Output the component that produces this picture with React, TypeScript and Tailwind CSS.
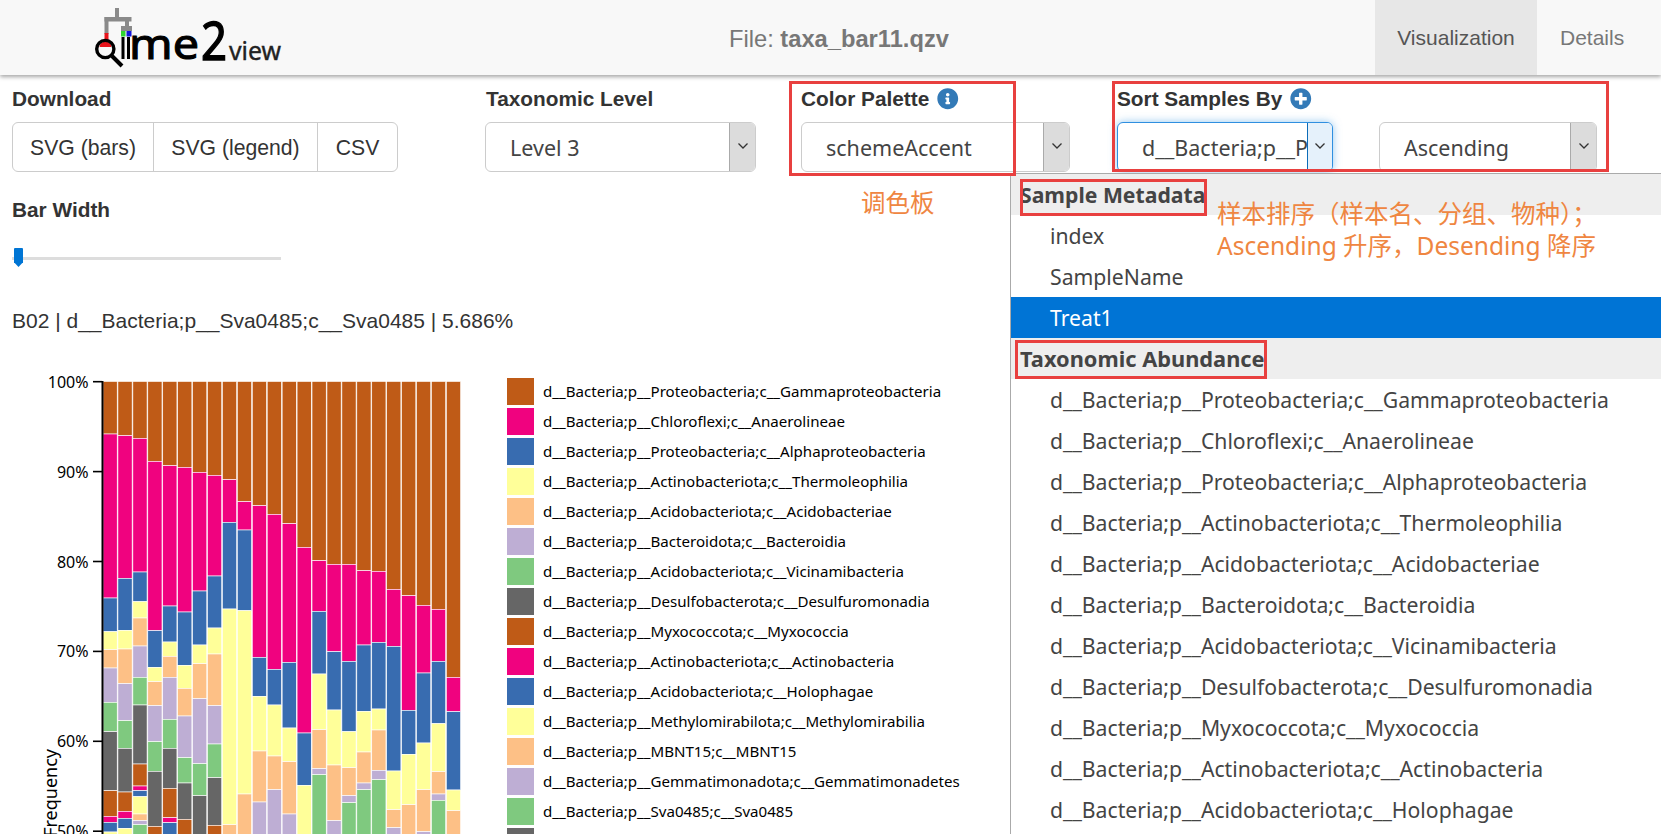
import React from 'react';
import { FaInfoCircle, FaPlusCircle } from 'react-icons/fa';

const uiFont = { fontFamily: '"Noto Sans", sans-serif' };

const ACCENT = ['#bf5b17', '#f0027f', '#386cb0', '#ffff99', '#fdc086', '#beaed4', '#7fc97f', '#666666'];

// y of each colour change per bar, top of the plot is 381.5
const BARS: number[][] = [
  [434, 598, 631.7, 649.7, 668, 702.3, 731.7, 790.7, 816.3, 822.3, 832],
  [435.7, 578.3, 630.3, 649, 683.7, 720.7, 748.3, 792, 811.3, 818.3, 828.3],
  [438.3, 572, 601.7, 618, 646, 677.3, 705, 764, 786, 790.7, 796.7, 814, 820.7, 824.7],
  [461.3, 630.7, 667.3, 681.7, 705.7, 741.7, 771.3, 826.3],
  [465.7, 606, 642, 656.3, 677.3, 719.3, 748.3, 788.3, 817.7, 822.7],
  [467.3, 612, 665.3, 688.3, 716, 757.7, 783, 819.3],
  [472.3, 591, 645, 663.7, 698.7, 763.7, 795.7],
  [475.3, 576, 628, 654, 705.7, 744, 777.7, 825.3],
  [479.7, 522.3, 609, 824.7],
  [501.7, 530, 610.7, 794],
  [505.7, 657.3, 696.3, 751, 802],
  [514.3, 669.3, 705, 756, 789.7],
  [523.7, 662.3, 728, 761.7, 814],
  [547.3, 733, 785.3],
  [560.7, 611.3, 674, 729.7, 768.7, 774.7],
  [564.3, 651.7, 710, 765, 820.7],
  [564.3, 661.3, 731.7, 767.7, 795.7, 802.7],
  [570.7, 645, 711.3, 752, 783, 789.7],
  [571.3, 642.3, 709, 730, 770.3, 779.7],
  [589.3, 646.3, 771, 809.7, 827.7],
  [595.7, 710.3, 754.3, 804.7],
  [605.3, 673, 743, 789.7, 831.7],
  [609.3, 661.3, 723.7, 771.7, 794, 800.3],
  [677.3, 711.7, 790, 810.7],
];

const TAXA = [
  'd__Bacteria;p__Proteobacteria;c__Gammaproteobacteria',
  'd__Bacteria;p__Chloroflexi;c__Anaerolineae',
  'd__Bacteria;p__Proteobacteria;c__Alphaproteobacteria',
  'd__Bacteria;p__Actinobacteriota;c__Thermoleophilia',
  'd__Bacteria;p__Acidobacteriota;c__Acidobacteriae',
  'd__Bacteria;p__Bacteroidota;c__Bacteroidia',
  'd__Bacteria;p__Acidobacteriota;c__Vicinamibacteria',
  'd__Bacteria;p__Desulfobacterota;c__Desulfuromonadia',
  'd__Bacteria;p__Myxococcota;c__Myxococcia',
  'd__Bacteria;p__Actinobacteriota;c__Actinobacteria',
  'd__Bacteria;p__Acidobacteriota;c__Holophagae',
  'd__Bacteria;p__Methylomirabilota;c__Methylomirabilia',
  'd__Bacteria;p__MBNT15;c__MBNT15',
  'd__Bacteria;p__Gemmatimonadota;c__Gemmatimonadetes',
  'd__Bacteria;p__Sva0485;c__Sva0485',
  'd__Bacteria;p__Firmicutes;c__Bacilli',
];

const Chevron = () => (
  <svg width="12" height="8" viewBox="0 0 12 8" fill="none" stroke="#333" strokeWidth="1.3">
    <path d="M1.5 1.5 L6 6 L10.5 1.5" />
  </svg>
);

const Logo = () => (
  <svg width="200" height="75" viewBox="90 0 200 75">
    <g fill="#8a8a8a">
      <rect x="115" y="8" width="4" height="10" />
      <rect x="104.5" y="17" width="27" height="4.5" />
      <rect x="104.5" y="17" width="4" height="17" />
      <rect x="125" y="17" width="4" height="12" />
      <rect x="121" y="26" width="11" height="5" />
    </g>
    <rect x="104.5" y="33" width="4" height="8" fill="#e8141c" />
    <rect x="121" y="31" width="4.5" height="5.5" fill="#2fd52f" />
    <rect x="126.5" y="31" width="5" height="5.5" fill="#1414d8" />
    <path d="M99.5 47 a6 5.5 0 0 1 12 0 z" fill="#e8141c" />
    <circle cx="105.3" cy="49" r="8.6" fill="none" stroke="#000" strokeWidth="3.4" />
    <path d="M112 56 L122 66" stroke="#000" strokeWidth="4" />
    <rect x="121.5" y="37" width="3" height="22" fill="#000" />
    <rect x="127" y="37" width="3" height="22" fill="#000" />
    <text x="129" y="59" fontFamily='"Noto Sans", sans-serif' fontSize="41" textLength="70" lengthAdjust="spacingAndGlyphs" fill="#000" stroke="#000" strokeWidth="1">me</text>
    <text x="201" y="60" fontFamily='"Noto Sans", sans-serif' fontSize="52" textLength="26" lengthAdjust="spacingAndGlyphs" fill="#000" stroke="#000" strokeWidth="1.4">2</text>
    <text x="229" y="59.5" fontFamily='"Noto Sans", sans-serif' fontSize="26" textLength="52" lengthAdjust="spacingAndGlyphs" fill="#222" stroke="#222" strokeWidth="0.4">view</text>
  </svg>
);

const SelectBox: React.FC<{ value: string; className: string; focused?: boolean }> = ({ value, className, focused }) => (
  <div
    className={
      'flex h-[50px] overflow-hidden rounded-md border bg-white ' +
      (focused ? 'border-[#2f8fe0] shadow-[0_0_8px_rgba(102,175,233,0.7)] ' : 'border-[#ccc] ') +
      className
    }
  >
    <div className="min-w-0 flex-1 overflow-hidden whitespace-nowrap pl-6 pt-[7px] text-[21.5px] leading-[36px] text-[#444]" style={uiFont}>
      {value}
    </div>
    <div
      className={
        'flex shrink-0 items-center justify-center border-l pb-[2px] ' +
        (focused ? 'w-[25px] border-[#0c6cb8] bg-[#e5f1fb]' : 'w-[26px] border-[#aaa] bg-[#dcdcdc]')
      }
    >
      <Chevron />
    </div>
  </div>
);

const Label: React.FC<{ children: React.ReactNode }> = ({ children }) => (
  <div className="flex h-[24px] items-center gap-[8px] text-[20.8px] font-bold leading-[24px] text-[#333]">{children}</div>
);

const Chart = () => {
  const ticks = [100, 90, 80, 70, 60, 50];
  return (
    <svg width="490" height="474" viewBox="0 360 490 474" className="block shrink-0">
      {BARS.map((stops, i) => {
        const x = 103 + i * 14.93;
        const ys = [381.5, ...stops, 840];
        return (
          <g key={i}>
            {ys.slice(0, -1).map((y, j) => (
              <rect
                key={j}
                x={x}
                y={y}
                width={14.2}
                height={ys[j + 1] - y}
                fill={ACCENT[j % 8]}
                stroke="#fff"
                strokeWidth="0.6"
              />
            ))}
          </g>
        );
      })}
      <path d="M102.5 381 V834" stroke="#000" strokeWidth="2" />
      {ticks.map((t, i) => {
        const y = 381.7 + i * 89.9;
        return (
          <g key={t}>
            <path d={`M93 ${y} H102`} stroke="#000" strokeWidth="1.6" />
            <text x="88.5" y={y + 6} textAnchor="end" fontSize="16" fill="#000" fontFamily='"Noto Sans", sans-serif'>
              {t}%
            </text>
          </g>
        );
      })}
      <text
        transform="translate(56.5 749) rotate(-90)"
        textAnchor="end"
        fontSize="18"
        fill="#000"
        fontFamily='"Noto Sans", sans-serif'
      >
        Frequency
      </text>
    </svg>
  );
};

const Dropdown = () => (
  <div className="absolute bottom-0 left-[1010px] right-0 top-[173px] overflow-hidden border-l border-t border-[#aaa] bg-white text-[21.2px] text-[#444]" style={uiFont}>
    <div className="h-[41px] bg-[#eee] pl-[9px] text-[21.2px] font-bold leading-[42px]">Sample Metadata</div>
    <div className="h-[41px] pl-[39px] leading-[42px]">index</div>
    <div className="h-[41px] pl-[39px] leading-[42px]">SampleName</div>
    <div className="h-[41px] bg-[#0074d5] pl-[39px] leading-[42px] text-white">Treat1</div>
    <div className="h-[41px] bg-[#eee] pl-[9px] text-[21.8px] font-bold leading-[42px]">Taxonomic Abundance</div>
    {TAXA.slice(0, 12).map((t) => (
      <div key={t} className="h-[41px] whitespace-nowrap pl-[39px] leading-[42px]">
        {t}
      </div>
    ))}
  </div>
);

export default function App() {
  return (
    <div className="relative h-[834px] w-full overflow-hidden bg-white font-['Liberation_Sans',sans-serif]">
      <header className="relative flex h-[75px] bg-[#f8f8f8] shadow-[0_2px_4px_rgba(0,0,0,0.35)]">
        <div className="w-[535px] pl-[90px]">
          <Logo />
        </div>
        <div className="w-[840px] pl-[194px] pt-[25px] text-[23.7px] leading-[28px] text-[#777]">
          File: <b>taxa_bar11.qzv</b>
        </div>
        <div className="flex h-[75px] w-[162px] items-center justify-center bg-[#e7e7e7] text-[21px] text-[#555]">Visualization</div>
        <div className="flex h-[75px] w-[124px] items-center pl-[23px] text-[21px] text-[#777]">Details</div>
      </header>

      <div className="flex pl-3 pt-[12px]">
        <div className="w-[474px] shrink-0">
          <Label>Download</Label>
          <div className="mt-[11px] flex h-[50px] w-[386px] rounded-md border border-[#ccc] pt-[2px] text-[21.2px] text-[#333]">
            <div className="flex w-[140px] items-center justify-center">SVG (bars)</div>
            <div className="-mt-[2px] w-px bg-[#ccc]" />
            <div className="flex w-[163px] items-center justify-center">SVG (legend)</div>
            <div className="-mt-[2px] w-px bg-[#ccc]" />
            <div className="flex flex-1 items-center justify-center">CSV</div>
          </div>
        </div>
        <div className="w-[315px] shrink-0">
          <Label>Taxonomic Level</Label>
          <SelectBox value="Level 3" className="-ml-px mt-[11px] w-[271px]" />
        </div>
        <div className="w-[316px] shrink-0">
          <Label>
            Color Palette <FaInfoCircle className="text-[21.5px] text-[#337ab7]" />
          </Label>
          <SelectBox value="schemeAccent" className="mt-[11px] w-[269px]" />
        </div>
        <div className="shrink-0">
          <Label>
            Sort Samples By <FaPlusCircle className="text-[21.5px] text-[#337ab7]" />
          </Label>
          <div className="mt-[11px] flex gap-[46px]">
            <SelectBox value={TAXA[0]} className="w-[216px]" focused />
            <SelectBox value="Ascending" className="w-[218px]" />
          </div>
        </div>
      </div>

      <div className="pl-3 pt-[26px]">
        <Label>Bar Width</Label>
        <div className="relative mt-[26px] h-[20px] w-[269px] pt-[9px]">
          <div className="h-[3px] w-full bg-[#ddd]" />
          <div className="absolute left-[2px] top-0 h-[19px] w-[9px] rounded-t-[1px] bg-[#0075d4] [clip-path:polygon(0_0,100%_0,100%_75%,50%_100%,0_75%)]" />
        </div>
        <div className="mt-[39px] text-[21px] leading-[28px] text-[#333]">B02 | d__Bacteria;p__Sva0485;c__Sva0485 | 5.686%</div>
      </div>

      <div className="mt-[25px] flex items-start">
        <Chart />
        <div className="ml-[17px] pt-[18px]" style={uiFont}>
          {TAXA.map((t, i) => (
            <div key={t} className="flex h-[30px] items-start gap-[9px]">
              <div className="h-[27px] w-[27px]" style={{ backgroundColor: ACCENT[i % 8] }} />
              <div className="whitespace-nowrap text-[15.1px] leading-[27px] text-black">{t}</div>
            </div>
          ))}
        </div>
      </div>

      <Dropdown />

      <div className="absolute left-[789px] top-[81px] h-[95px] w-[227px] border-[3px] border-[#e8403f]" />
      <div className="absolute left-[1112px] top-[81px] h-[91px] w-[497px] border-[3px] border-[#e8403f]" />
      <div className="absolute left-[1020px] top-[179px] h-[37px] w-[187px] border-[3px] border-[#e8403f]" />
      <div className="absolute left-[1015px] top-[340px] h-[39px] w-[252px] border-[3px] border-[#e8403f]" />

      <div className="absolute left-[861px] top-[186px] text-[24.5px] leading-[32px] text-[#ef8641]" style={{ fontFamily: '"Noto Sans CJK SC", sans-serif' }}>
        调色板
      </div>
      <div className="absolute left-[1217px] top-[198px] whitespace-nowrap text-[24.5px] leading-[32px] text-[#ef8641]" style={{ fontFamily: '"Noto Sans", "Noto Sans CJK SC", sans-serif' }}>
        样本排序（样本名、分组、物种）；
        <br />
        Ascending 升序，Desending 降序
      </div>
    </div>
  );
}
